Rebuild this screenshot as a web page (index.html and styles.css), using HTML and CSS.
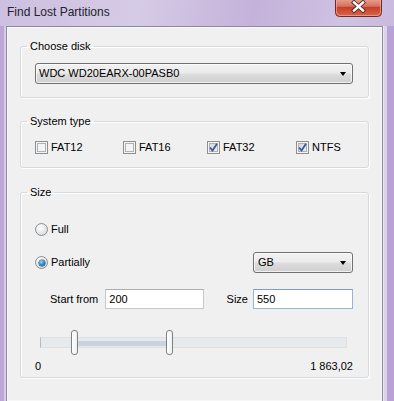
FILE: index.html
```html
<!DOCTYPE html>
<html>
<head>
<meta charset="utf-8">
<link rel="stylesheet" href="styles.css">
</head>
<body>
<div class="window">
  <div class="titlebar">
    <span class="title">Find Lost Partitions</span>
    <div class="close">
      <svg width="47" height="18" viewBox="0 0 47 18">
        <defs>
          <linearGradient id="cg" x1="0" y1="0" x2="0" y2="1">
            <stop offset="0" stop-color="#eaa898"/>
            <stop offset="0.45" stop-color="#d7705c"/>
            <stop offset="0.5" stop-color="#c63f28"/>
            <stop offset="1" stop-color="#d8664a"/>
          </linearGradient>
        </defs>
        <path d="M0.5 -1 V13.5 Q0.5 17.5 4.5 17.5 H42.5 Q46.5 17.5 46.5 13.5 V-1" fill="url(#cg)" stroke="#6e2b24"/>
        <path d="M1.5 -1 V13 Q1.5 16.5 5 16.5 H42 Q45.5 16.5 45.5 13 V-1" fill="none" stroke="#f0b8ab" stroke-opacity="0.6"/>
        <path d="M19 3.5 L28 11.5 M28 3.5 L19 11.5" stroke="#4a2a28" stroke-width="4.2" stroke-linecap="square"/>
        <path d="M19 3.5 L28 11.5 M28 3.5 L19 11.5" stroke="#ffffff" stroke-width="2.4" stroke-linecap="square"/>
      </svg>
    </div>
  </div>
  <div class="client">
    <fieldset class="group g-disk">
      <legend>Choose disk</legend>
      <div class="combo combo-wide">
        <span class="combo-text">WDC WD20EARX-00PASB0</span>
        <span class="arrow"></span>
      </div>
    </fieldset>

    <fieldset class="group g-type">
      <legend>System type</legend>
      <div class="checks">
        <label class="check"><span class="box"></span>FAT12</label>
        <label class="check"><span class="box"></span>FAT16</label>
        <label class="check"><span class="box checked"><svg width="9" height="9" viewBox="0 0 9 9"><path d="M1 4.5 L3.5 7.5 L8 0.8" fill="none" stroke="#3c5a98" stroke-width="1.8"/></svg></span>FAT32</label>
        <label class="check"><span class="box checked"><svg width="9" height="9" viewBox="0 0 9 9"><path d="M1 4.5 L3.5 7.5 L8 0.8" fill="none" stroke="#3c5a98" stroke-width="1.8"/></svg></span>NTFS</label>
      </div>
    </fieldset>

    <fieldset class="group g-size">
      <legend>Size</legend>
      <div class="row row-full">
        <label class="radio"><span class="dot"></span>Full</label>
      </div>
      <div class="row row-part">
        <label class="radio"><span class="dot on"></span>Partially</label>
        <div class="combo combo-unit">
          <span class="combo-text">GB</span>
          <span class="arrow"></span>
        </div>
      </div>
      <div class="row row-fields">
        <div class="field">
          <span class="flabel">Start from</span>
          <span class="input input-start">200</span>
        </div>
        <div class="field">
          <span class="flabel">Size</span>
          <span class="input input-size">550</span>
        </div>
      </div>
      <div class="slider">
        <div class="track"></div>
        <div class="range" style="left:42px;width:89px"></div>
        <div class="thumb" style="left:36px"></div>
        <div class="thumb" style="left:131px"></div>
      </div>
      <div class="row row-scale">
        <span>0</span>
        <span>1 863,02</span>
      </div>
    </fieldset>
  </div>
</div>
</body>
</html>
```

FILE: styles.css
```css
html, body {
  margin: 0;
  padding: 0;
}
body {
  width: 394px;
  height: 401px;
  overflow: hidden;
  font-family: Tahoma, "Liberation Sans", sans-serif;
  font-size: 11px;
  color: #000;
}
.window {
  width: 394px;
  height: 401px;
  display: flex;
  flex-direction: column;
  background: linear-gradient(100deg, #cdbfe0 0%, #d6cbe6 30%, #c4b2da 55%, #cfc2e2 75%, #c2aedb 100%);
}
.titlebar {
  height: 26px;
  display: flex;
  align-items: flex-start;
  justify-content: space-between;
  flex: none;
}
.title {
  font-family: "Liberation Sans", sans-serif;
  font-size: 12px;
  color: #22222c;
  padding-left: 7px;
  line-height: 14px;
  margin-top: 5px;
}
.close {
  margin-right: 12px;
  height: 18px;
  margin-top: -1px;
}
.close svg {
  display: block;
}
.client {
  flex: 1;
  margin: 0 11px 0 6px;
  border: 1px solid #8a8c99;
  border-bottom: none;
  background: #f0f0f0;
  box-shadow: 1px 0 0 #ece6f3, 4px 0 0 #dcd2e9, 11px 0 0 #b9a2d4, -2px 0 0 #d8cde7, -6px 0 0 #bca6d6, inset 0 0 0 1px #f7f7f7;
  display: flex;
  flex-direction: column;
}
.group {
  margin: 0 13px;
  border: 1px solid #d5dadf;
  border-radius: 3px;
  box-shadow: inset 1px 1px 0 #fff, 1px 1px 0 #fff;
  padding: 0 15px 0 14px;
}
.group legend {
  padding: 0 3px;
  margin-left: -8px;
  line-height: 13px;
  height: 13px;
  color: #000;
}
.g-disk {
  margin-top: 13px;
  padding-top: 10px;
  padding-bottom: 13px;
}
.g-type {
  margin-top: 17px;
  padding-top: 13px;
  padding-bottom: 13px;
}
.g-size {
  margin-top: 18px;
  padding-top: 20px;
  padding-bottom: 4px;
}

/* combo box */
.combo {
  box-sizing: border-box;
  height: 21px;
  border: 1px solid #707070;
  border-radius: 3px;
  background: linear-gradient(#f2f2f2 0%, #ebebeb 48%, #dddddd 52%, #cfcfcf 100%);
  box-shadow: inset 0 0 0 1px rgba(255,255,255,0.7);
  display: flex;
  align-items: center;
  justify-content: space-between;
  padding: 0 6px 0 3px;
}
.combo-text {
  line-height: 13px;
}
.arrow {
  width: 0;
  height: 0;
  border-left: 3.5px solid transparent;
  border-right: 3.5px solid transparent;
  border-top: 4px solid #000;
  margin-top: 1px;
}
.combo-unit {
  width: 100px;
  height: 21px;
  padding-left: 4px;
}

/* checkboxes */
.checks {
  display: grid;
  grid-template-columns: 88px 84px 89px auto;
  height: 13px;
}
.check, .radio {
  display: flex;
  align-items: center;
  gap: 3px;
  line-height: 13px;
}
.box {
  box-sizing: border-box;
  width: 13px;
  height: 13px;
  border: 1px solid #8e8f8f;
  background: #f4f4f4;
  box-shadow: inset 0 0 0 1px #f4f4f4, inset 0 0 0 2px #aeb3b9;
  display: flex;
  align-items: center;
  justify-content: center;
  flex: none;
}
.box.checked {
  background: linear-gradient(135deg, #cfd4da, #f2f3f4);
}
.box svg {
  display: block;
}

/* radio */
.row {
  display: flex;
  align-items: center;
}
.row-full {
  height: 20px;
}
.row-part {
  margin-top: 13px;
  height: 21px;
  justify-content: space-between;
}
.dot {
  box-sizing: border-box;
  width: 13px;
  height: 13px;
  border-radius: 50%;
  border: 1px solid #8e8f8f;
  background: radial-gradient(circle at 40% 35%, #ffffff 0%, #e2e4e6 60%, #c9ccd0 100%);
  display: flex;
  align-items: center;
  justify-content: center;
  flex: none;
}
.dot.on::after {
  content: "";
  width: 6px;
  height: 6px;
  border-radius: 50%;
  background: radial-gradient(circle at 40% 35%, #a8e3ff 0%, #2a8fd0 45%, #0d4f8b 100%);
  box-shadow: 0 0 0 0.5px #0f3f6b;
}

/* fields */
.row-fields {
  margin-top: 16px;
  height: 20px;
  justify-content: space-between;
}
.field {
  display: flex;
  align-items: center;
}
.field:first-child {
  padding-left: 15px;
}
.flabel {
  line-height: 13px;
}
.input {
  box-sizing: border-box;
  height: 20px;
  background: #fff;
  border: 1px solid #c5c9cf;
  border-top-color: #abadb3;
  display: flex;
  align-items: center;
  padding-left: 3px;
  line-height: 13px;
}
.input-start {
  width: 99px;
  margin-left: 7px;
}
.input-size {
  width: 100px;
  margin-left: 5px;
  border-color: #98b4d2;
  border-top-color: #7c9ec4;
}

/* slider */
.slider {
  position: relative;
  height: 25px;
  margin-top: 21px;
}
.track {
  position: absolute;
  left: 5px;
  right: 6px;
  top: 7px;
  height: 11px;
  box-sizing: border-box;
  background: #e7eaec;
  border: 1px solid #dde1e5;
  border-left-color: #b8bcc0;
}
.range {
  position: absolute;
  top: 11px;
  height: 5px;
  background: #c8d3dd;
}
.thumb {
  position: absolute;
  top: 0;
  width: 7px;
  height: 25px;
  box-sizing: border-box;
  border: 1px solid #7d8287;
  border-radius: 3px;
  background: linear-gradient(90deg, #ffffff, #eef0f2);
}

.row-scale {
  margin-top: 5px;
  height: 13px;
  line-height: 13px;
  justify-content: space-between;
}
```
